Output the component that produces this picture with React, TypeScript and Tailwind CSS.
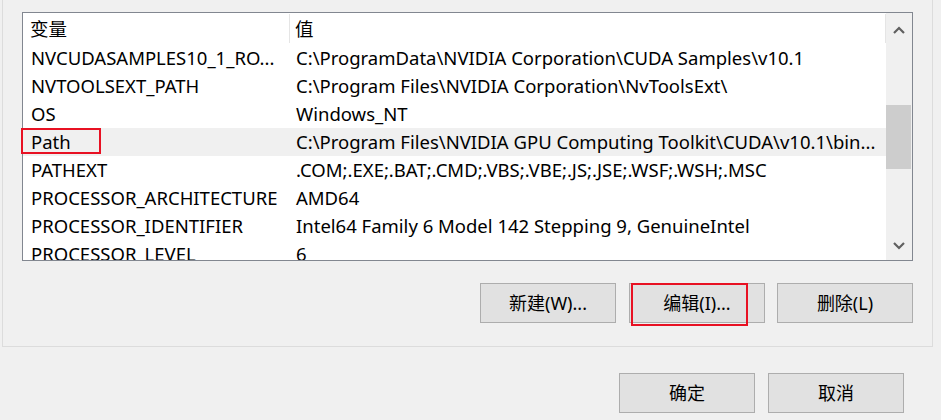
import React from "react";

type EnvVar = { name: string; value: string; selected?: boolean };

const vars: EnvVar[] = [
    { name: "NVCUDASAMPLES10_1_RO...", value: "C:\\ProgramData\\NVIDIA Corporation\\CUDA Samples\\v10.1" },
    { name: "NVTOOLSEXT_PATH", value: "C:\\Program Files\\NVIDIA Corporation\\NvToolsExt\\" },
    { name: "OS", value: "Windows_NT" },
    { name: "Path", value: "C:\\Program Files\\NVIDIA GPU Computing Toolkit\\CUDA\\v10.1\\bin...", selected: true },
    { name: "PATHEXT", value: ".COM;.EXE;.BAT;.CMD;.VBS;.VBE;.JS;.JSE;.WSF;.WSH;.MSC" },
    { name: "PROCESSOR_ARCHITECTURE", value: "AMD64" },
    { name: "PROCESSOR_IDENTIFIER", value: "Intel64 Family 6 Model 142 Stepping 9, GenuineIntel" },
    { name: "PROCESSOR_LEVEL", value: "6" },
];

const Chevron: React.FC<{ up?: boolean }> = ({ up }) => (
    <svg width="12" height="8" viewBox="0 0 12 8">
        <polyline
            points={up ? "1,7 6,2 11,7" : "1,1 6,6 11,1"}
            fill="none"
            stroke="#606060"
            strokeWidth="2.2"
        />
    </svg>
);

const WinButton: React.FC<{ label: string; highlight?: boolean }> = ({ label, highlight }) => (
    <div className="relative w-[136px] h-[40px] flex items-center justify-center bg-[#e1e1e1] border border-[#adadad] text-[18px] text-black">
        {label}
        {highlight && (
            <div className="absolute left-[1px] top-[-1px] w-[117px] h-[43px] border-2 border-[#e81123]" />
        )}
    </div>
);

const App: React.FC = () => {
    return (
        <div
            className="w-[941px] h-[420px] bg-[#f0f0f0] overflow-hidden"
            style={{ fontFamily: '"Noto Sans", "Noto Sans CJK SC", sans-serif' }}
        >
            {/* 系统变量 分组框 */}
            <div className="ml-[2px] w-[931px] h-[347px] border-x border-b border-[#dcdcdc] pt-[12px] px-[19px]">
                <div className="relative w-[891px] h-[249px] border border-[#828790] bg-white flex">
                    <div className="w-[863px] h-[247px] overflow-hidden">
                        {/* 表头 */}
                        <div className="h-[31px] flex text-[18.5px] text-black">
                            <div className="w-[266px] pl-[7px] flex items-center">变量</div>
                            <div className="w-px h-[29px] mt-[1px] bg-[#e5e5e5]" />
                            <div className="flex-1 pl-[5px] flex items-center">值</div>
                            <div className="w-px h-[29px] mt-[1px] bg-[#e5e5e5]" />
                        </div>
                        {vars.map((v, i) => (
                            <div
                                key={i}
                                className={`h-[28px] flex text-[18.5px] text-black whitespace-nowrap ${v.selected ? "bg-[#f0f0f0]" : ""}`}
                            >
                                <div className="w-[266px] pl-[8px] flex items-center">{v.name}</div>
                                <div className="pl-[7px] flex items-center">{v.value}</div>
                            </div>
                        ))}
                    </div>
                    {/* Path 标注框 */}
                    <div className="absolute left-[-2px] top-[115px] w-[80px] h-[26px] border-2 border-[#e81123]" />
                    {/* 滚动条 */}
                    <div className="w-[26px] h-[247px] bg-[#f0f0f0] flex flex-col">
                        <div className="h-[33px] flex items-center justify-center pr-[1px]">
                            <Chevron up />
                        </div>
                        <div className="h-[59px]" />
                        <div className="w-[25px] h-[64px] bg-[#cdcdcd]" />
                        <div className="flex-1" />
                        <div className="h-[26px] flex items-center justify-center pr-[1px] pb-[2px]">
                            <Chevron />
                        </div>
                    </div>
                </div>
                <div className="mt-[22px] flex justify-end">
                    <WinButton label="新建(W)..." />
                    <div className="w-[13px]" />
                    <WinButton label="编辑(I)..." highlight />
                    <div className="w-[12px]" />
                    <WinButton label="删除(L)" />
                </div>
            </div>
            <div className="mt-[26px] pr-[37px] flex justify-end gap-[13px]">
                <WinButton label="确定" />
                <WinButton label="取消" />
            </div>
        </div>
    );
};

export default App;
